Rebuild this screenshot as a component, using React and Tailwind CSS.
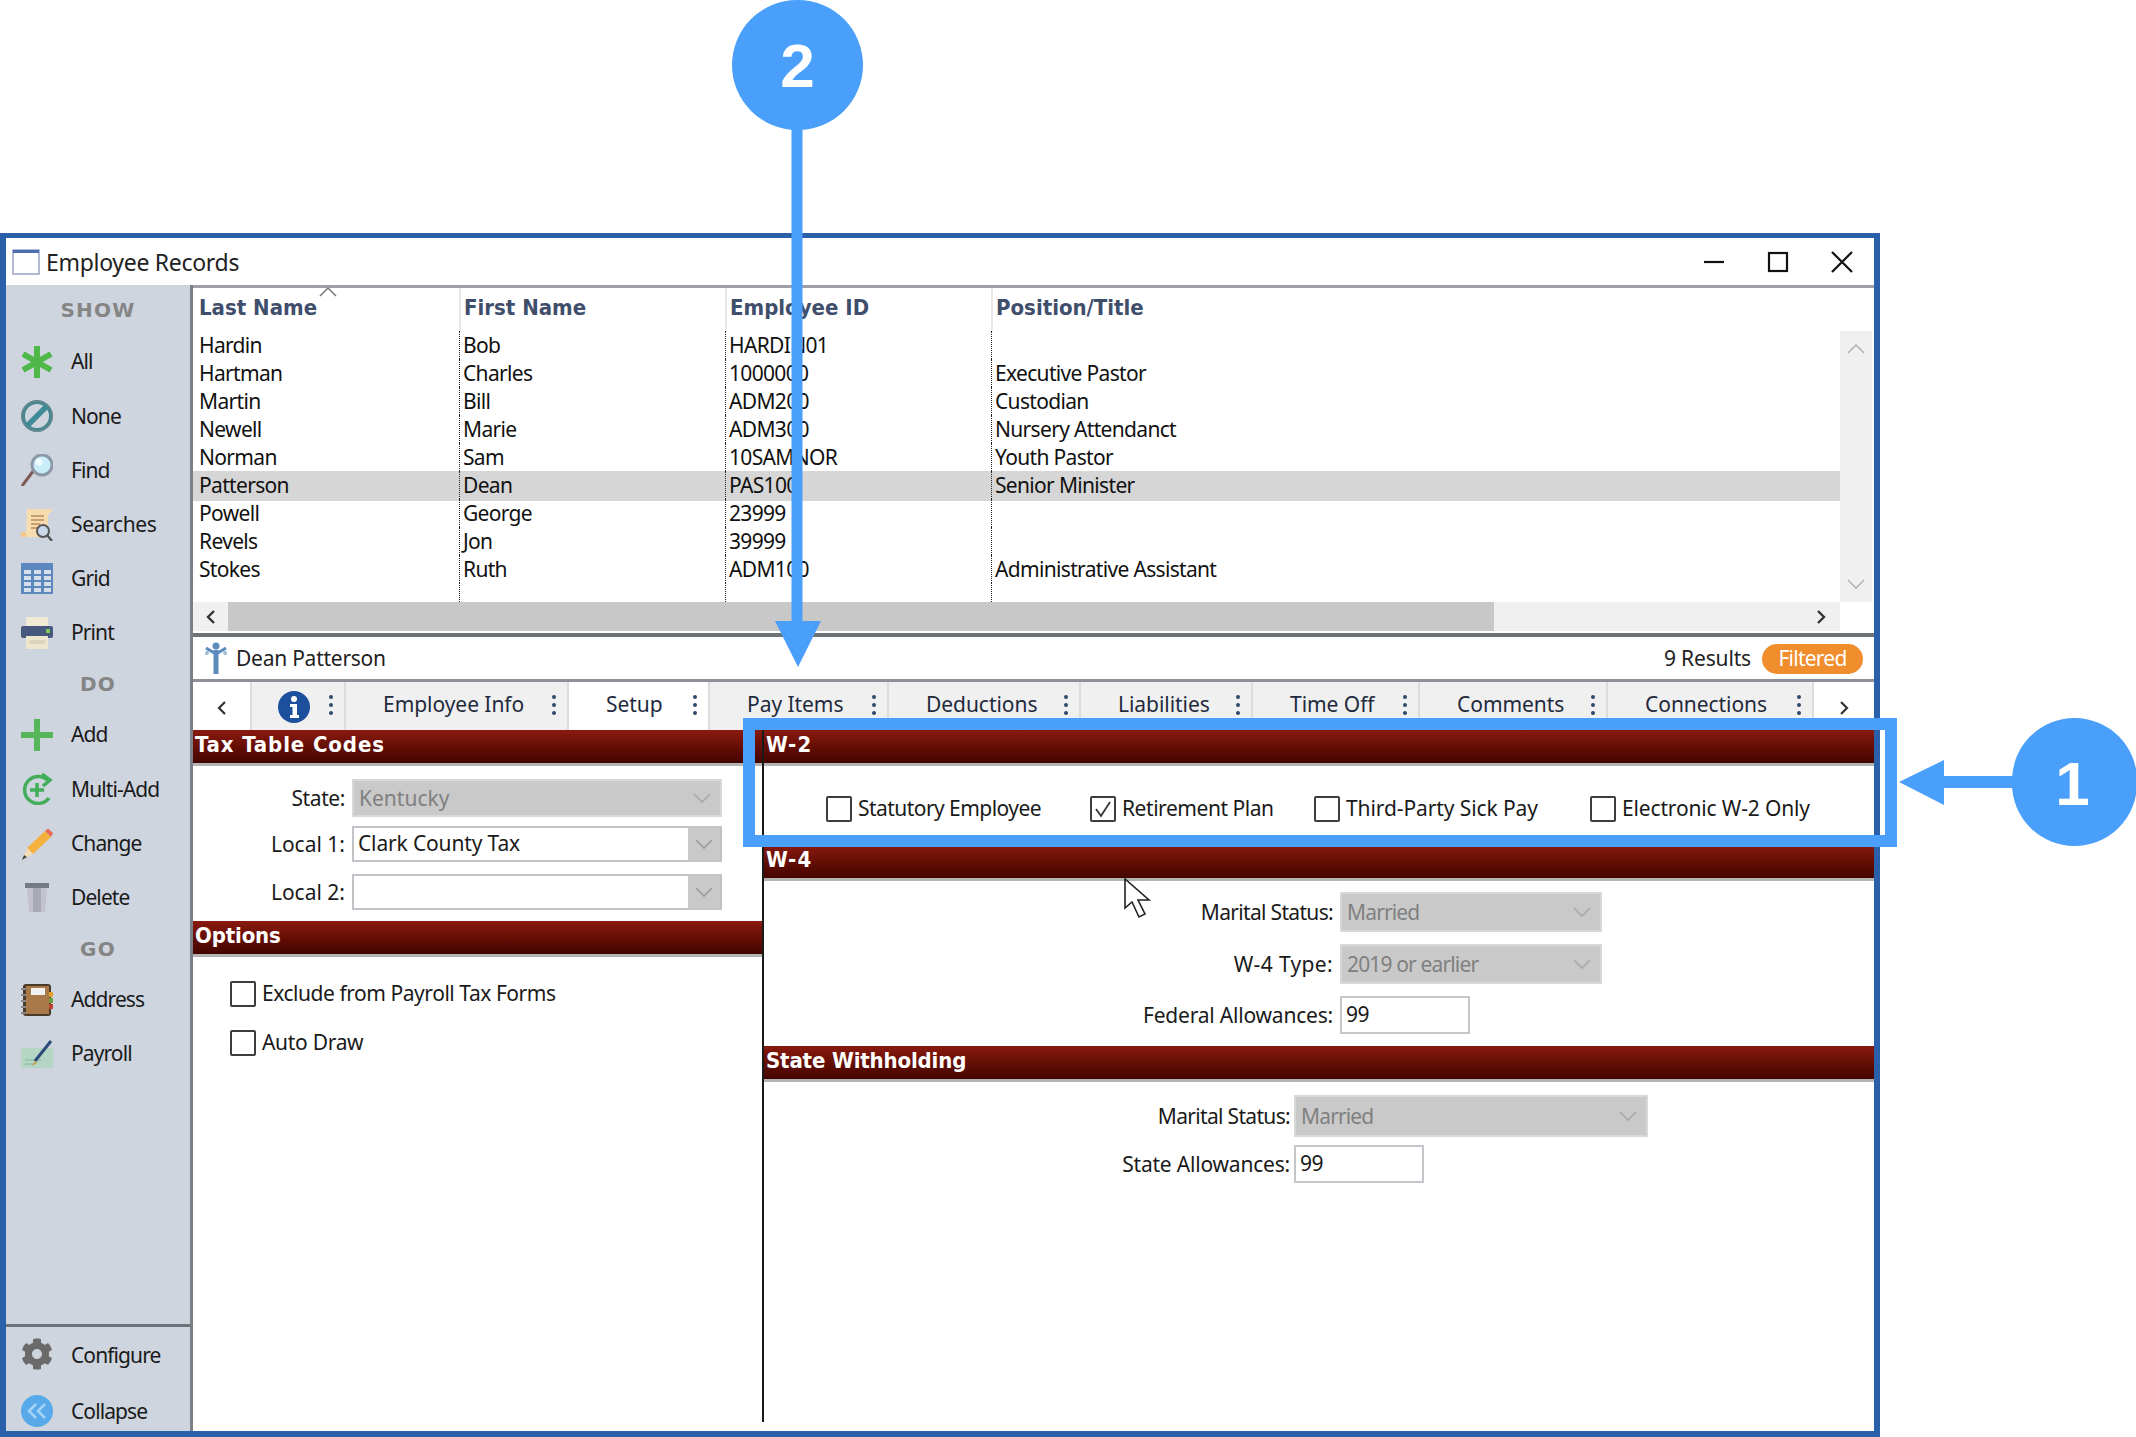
import React from "react";
import { FaCog } from "react-icons/fa";

const Ic = ({ children }) => (
  <svg viewBox="0 0 32 32" className="w-[32px] h-[32px] shrink-0">{children}</svg>
);

const icons = {
  All: (
    <Ic>
      <g stroke="#4fb848" strokeWidth="6" strokeLinecap="butt">
        <path d="M16 0V32M2 8L30 24M2 24L30 8" />
      </g>
    </Ic>
  ),
  None: (
    <Ic>
      <circle cx="16" cy="16" r="14" fill="#ced5df" stroke="#4b8790" strokeWidth="4" />
      <circle cx="16" cy="16" r="15.5" fill="none" stroke="#7b8a92" strokeWidth="1" />
      <path d="M7 25L25 7" stroke="#3f8c96" strokeWidth="5.5" />
    </Ic>
  ),
  Find: (
    <Ic>
      <path d="M1 32L13 16" stroke="#7d5a52" strokeWidth="3" />
      <circle cx="21" cy="11" r="10" fill="#c9eefa" stroke="#8d98a8" strokeWidth="3" />
      <circle cx="18" cy="8" r="3.5" fill="#f0fbff" />
    </Ic>
  ),
  Searches: (
    <Ic>
      <path d="M6 0H32L27 6V28H0L5 23Z" fill="#f7dcb0" />
      <path d="M5 23H0V28H5Z" fill="#f2c88c" />
      <path d="M10 7H23M10 11H23M10 15H19M10 19H17" stroke="#c9a070" strokeWidth="2" />
      <circle cx="22" cy="22" r="6" fill="#c9d8e8" stroke="#555" strokeWidth="2" />
      <path d="M26 26L31 32" stroke="#555" strokeWidth="2.5" />
    </Ic>
  ),
  Grid: (
    <Ic>
      <rect x="0" y="0" width="32" height="31" fill="#5d88bd" />
      <g fill="#d5dee9">
        {[7, 13, 19, 25].map((y) =>
          [3, 13, 23].map((x) => <rect key={x + "-" + y} x={x} y={y} width="7" height="4" />)
        )}
      </g>
    </Ic>
  ),
  Print: (
    <Ic>
      <rect x="5" y="0" width="22" height="10" fill="#f0ead4" />
      <rect x="0" y="9" width="32" height="12" rx="2" fill="#47587e" />
      <rect x="25" y="12" width="4" height="4" fill="#7ec850" />
      <rect x="5" y="19" width="22" height="13" fill="#eee7cf" />
      <rect x="8" y="23" width="16" height="4" fill="#dcd5bc" />
    </Ic>
  ),
  Add: (
    <Ic>
      <path d="M16 0V32M0 16H32" stroke="#56b65a" strokeWidth="6" />
    </Ic>
  ),
  "Multi-Add": (
    <Ic>
      <path d="M28 9A13.5 13.5 0 1 0 28 25" fill="none" stroke="#44ad5a" strokeWidth="3.5" />
      <path d="M21 1L29 7L22 13" fill="none" stroke="#44ad5a" strokeWidth="3.5" />
      <path d="M16 10V24M9 17H23" stroke="#44ad5a" strokeWidth="3.5" />
    </Ic>
  ),
  Change: (
    <Ic>
      <path d="M6 20L24 3L30 9L12 26Z" fill="#f5b13d" />
      <path d="M24 3L27 0.5L32 5L30 9Z" fill="#e96a55" />
      <path d="M6 20L12 26L1 32Z" fill="#f3dcb4" />
      <path d="M1 32L3 27L6 29Z" fill="#444" />
    </Ic>
  ),
  Delete: (
    <Ic>
      <rect x="4" y="1" width="24" height="5" fill="#767a84" />
      <path d="M6 6H26L24 30H8Z" fill="#c2c3cc" />
      <rect x="12" y="6" width="8" height="24" fill="#a8abb6" />
    </Ic>
  ),
  Address: (
    <Ic>
      <rect x="2" y="0" width="28" height="32" rx="3" fill="#4a3a28" />
      <rect x="5" y="2" width="23" height="28" fill="#a9794a" />
      <rect x="10" y="4" width="14" height="7" fill="#f2f2f2" />
      <rect x="28" y="8" width="4" height="5" fill="#e0a030" />
      <rect x="28" y="14" width="4" height="5" fill="#6aa040" />
      <rect x="28" y="20" width="4" height="5" fill="#c04030" />
      <g fill="#888">
        {[4, 10, 16, 22, 28].map((y) => (
          <rect key={y} x="0" y={y} width="5" height="2" />
        ))}
      </g>
    </Ic>
  ),
  Payroll: (
    <Ic>
      <rect x="0" y="10" width="32" height="20" fill="#b5d6c4" />
      <path d="M4 22H20M4 26H14" stroke="#9cc4ae" strokeWidth="2" />
      <path d="M14 23L30 3" stroke="#2e4a78" strokeWidth="3" />
      <path d="M14 23L11 28L16 25Z" fill="#c9a040" />
    </Ic>
  ),
  Configure: <FaCog className="w-[32px] h-[32px] shrink-0 text-[#6a6a6a]" />,
  Collapse: (
    <Ic>
      <circle cx="16" cy="16" r="16" fill="#58a9ea" />
      <path d="M15 9L8 16L15 23M24 9L17 16L24 23" fill="none" stroke="#a5d4f8" strokeWidth="2.5" />
    </Ic>
  ),
};

const Item = ({ label, h = "h-[54.2px]", track = "tracking-[-0.9px]", textPad = "" }) => (
  <div className={`${h} shrink-0 flex items-center pl-[15px] gap-[18px] text-[21px] ${track} text-[#1a1a1a]`}>
    {icons[label]}
    <span className={textPad}>{label}</span>
  </div>
);

const Heading = ({ children, h = "h-[48px]" }) => (
  <div className={`${h} shrink-0 flex items-center justify-center font-['DejaVu_Sans'] font-bold text-[20px] text-[#858585] tracking-[1.2px]`}>
    {children}
  </div>
);

const rows = [
  ["Hardin", "Bob", "HARDIN01", ""],
  ["Hartman", "Charles", "1000000", "Executive Pastor"],
  ["Martin", "Bill", "ADM200", "Custodian"],
  ["Newell", "Marie", "ADM300", "Nursery Attendanct"],
  ["Norman", "Sam", "10SAMNOR", "Youth Pastor"],
  ["Patterson", "Dean", "PAS100", "Senior Minister"],
  ["Powell", "George", "23999", ""],
  ["Revels", "Jon", "39999", ""],
  ["Stokes", "Ruth", "ADM100", "Administrative Assistant"],
];

const Dots = () => (
  <span className="flex flex-col gap-[4px] shrink-0">
    <i className="block w-[4px] h-[4px] rounded-full bg-[#2f4a6b]" />
    <i className="block w-[4px] h-[4px] rounded-full bg-[#2f4a6b]" />
    <i className="block w-[4px] h-[4px] rounded-full bg-[#2f4a6b]" />
  </span>
);

const Tab = ({ label, w, active }) => (
  <div
    className={`${w} ${active ? "bg-white" : "bg-[#f0f0f0]"} h-full flex items-center justify-between pl-[37px] pr-[11px] pb-[3px] border-r-2 border-[#dcdcdc] text-[21px] text-[#1f2a3d] tracking-[-0.05px]`}
  >
    <span>{label}</span>
    <Dots />
  </div>
);

const Section = ({ children, track = "tracking-[-0.15px]" }) => (
  <div className="h-[36px] shrink-0 pl-[2px] bg-linear-to-b from-[#8a1a10] to-[#430500] border-b-[3px] border-[#b4b4b4] flex items-start">
    <span className={`font-['DejaVu_Sans_Condensed','DejaVu_Sans'] font-bold text-[22px] leading-[30px] text-white ${track}`}>{children}</span>
  </div>
);

const Chevron = ({ className = "", color = "#a8a8a8" }) => (
  <svg viewBox="0 0 20 12" className={`w-[20px] h-[12px] ${className}`}>
    <path d="M2 2L10 10L18 2" fill="none" stroke={color} strokeWidth="1.6" />
  </svg>
);

const Disabled = ({ value, w, track = "tracking-[-0.85px]" }) => (
  <div className={`${w} h-full bg-[#c9c9c9] border-2 border-[#d8d8d8] flex items-center justify-between pl-[5px] pr-[8px] text-[21px] text-[#808080] ${track}`}>
    <span className="pt-[1px]">{value}</span>
    <Chevron />
  </div>
);

const Combo = ({ value }) => (
  <div className="w-[370px] h-full bg-white border-2 border-[#c0c2c8] flex items-center justify-between pl-[4px] text-[21px] text-[#1a1a1a] tracking-[-0.15px]">
    <span>{value}</span>
    <span className="w-[32px] h-full bg-[#c9c9c9] flex items-center justify-center">
      <Chevron color="#9a9a9a" />
    </span>
  </div>
);

const Input = ({ value }) => (
  <div className="w-[130px] h-full bg-white border-2 border-[#c4c6cc] flex items-center pl-[4px] text-[21px] text-[#1a1a1a] tracking-[-0.4px]">
    {value}
  </div>
);

const Box = ({ checked }) => (
  <span className="w-[26px] h-[26px] shrink-0 border-2 border-[#3d3d3d] bg-white rounded-[2px] flex items-center justify-center">
    {checked && (
      <svg viewBox="0 0 20 20" className="w-[20px] h-[20px]">
        <path d="M3 10L8 17L17 3" fill="none" stroke="#333" strokeWidth="1.8" />
      </svg>
    )}
  </span>
);

const Check = ({ label, checked, w, track }) => (
  <div className={`${w} flex items-center gap-[6px] h-[30px] text-[21px] text-[#1a1a1a] ${track} whitespace-nowrap`}>
    <Box checked={checked} />
    <span>{label}</span>
  </div>
);

const Row = ({ label, labelW, h, mt, gap, track = "tracking-[-0.67px]", children }) => (
  <div className={`flex items-center ${h} ${mt} ${gap}`}>
    <div className={`${labelW} pt-[1px] text-right text-[21px] text-[#1a1a1a] ${track} shrink-0`}>{label}</div>
    {children}
  </div>
);

export default function App() {
  return (
    <div className="relative w-[2136px] h-[1437px] overflow-hidden bg-white pt-[233px] font-['Noto_Sans',sans-serif]">
      <div className="w-[1880px] h-[1204px] border-t-[5px] border-x-[6px] border-b-[6px] border-[#2a5fa9] bg-white flex flex-col">
        {/* title bar */}
        <div className="h-[47px] shrink-0 flex items-center pl-[6px] pr-[20px]">
          <svg viewBox="0 0 28 26" className="w-[28px] h-[26px] shrink-0">
            <rect x="1" y="1" width="26" height="24" fill="#fff" stroke="#9aa2c4" strokeWidth="1.5" />
            <rect x="1" y="1" width="26" height="3" fill="#4a6fb0" />
          </svg>
          <span className="ml-[6px] pt-[2px] text-[23px] text-[#222] tracking-[-0.3px]">Employee Records</span>
          <div className="ml-auto flex items-center gap-[40px]">
            <svg viewBox="0 0 24 24" className="w-[24px] h-[24px]"><path d="M2 12H22" stroke="#111" strokeWidth="2.2" /></svg>
            <svg viewBox="0 0 24 24" className="w-[24px] h-[24px]"><rect x="3" y="3" width="18" height="18" fill="none" stroke="#111" strokeWidth="2.2" /></svg>
            <svg viewBox="0 0 24 24" className="w-[24px] h-[24px]"><path d="M2 2L22 22M22 2L2 22" stroke="#111" strokeWidth="2.2" /></svg>
          </div>
        </div>

        <div className="flex flex-1 min-h-0">
          {/* sidebar */}
          <aside className="w-[187px] shrink-0 bg-[#ced5df] border-r-[3px] border-[#7c7f84] flex flex-col">
            <Heading h="h-[50px]">SHOW</Heading>
            {["All", "None", "Find"].map((l) => <Item key={l} label={l} />)}
            <Item label="Searches" track="tracking-[-0.35px]" />
            {["Grid", "Print"].map((l) => <Item key={l} label={l} />)}
            <Heading>DO</Heading>
            {["Add", "Multi-Add", "Change", "Delete"].map((l) => <Item key={l} label={l} />)}
            <Heading>GO</Heading>
            {["Address", "Payroll"].map((l) => <Item key={l} label={l} />)}
            <div className="mt-auto border-t-[3px] border-[#6f7277]">
              <Item label="Configure" h="h-[54px]" textPad="pt-[4px]" />
              <Item label="Collapse" h="h-[50px] pt-[10px]" textPad="pt-[2px]" />
            </div>
          </aside>

          {/* main */}
          <main className="flex-1 min-w-0 flex flex-col">
            {/* list */}
            <div className="h-[348px] shrink-0 border-t-[3px] border-[#9da1a7] flex flex-col">
              <div className="h-[43px] shrink-0 grid grid-cols-[266px_266px_266px_1fr] font-['DejaVu_Sans_Condensed','DejaVu_Sans'] font-bold text-[22px] text-[#3f4e6b] relative">
                {["Last Name", "First Name", "Employee ID", "Position/Title"].map((t, i) => (
                  <div key={t} className={`pt-[3px] ${i ? "pl-[3px] border-l-2 border-[#e8e8e8]" : "pl-[6px]"}`}>{t}</div>
                ))}
                <svg viewBox="0 0 18 10" className="absolute left-[126px] top-[-1px] w-[18px] h-[10px]">
                  <path d="M1 9L9 1L17 9" fill="none" stroke="#777" strokeWidth="1.5" />
                </svg>
              </div>
              <div className="h-[271px] shrink-0 flex">
                <div className="flex-1 min-w-0 flex flex-col">
                  {rows.map((r) => (
                    <div
                      key={r[0]}
                      className={`h-[28px] shrink-0 grid grid-cols-[266px_266px_266px_1fr] text-[21px] leading-[28px] tracking-[-0.67px] text-[#111] ${r[0] === "Patterson" ? "bg-[#d6d6d6] shadow-[0_2px_0_#d6d6d6]" : ""}`}
                    >
                      {r.map((c, i) => (
                        <div key={i} className={`whitespace-nowrap ${i ? "border-l border-dotted border-[#222] pl-[3px]" : "pl-[6px]"}`}>{c}</div>
                      ))}
                    </div>
                  ))}
                  <div className="flex-1 grid grid-cols-[266px_266px_266px_1fr]">
                    <div />
                    <div className="border-l border-dotted border-[#222]" />
                    <div className="border-l border-dotted border-[#222]" />
                    <div className="border-l border-dotted border-[#222]" />
                  </div>
                </div>
                <div className="w-[32px] shrink-0 mr-[2px] bg-[#f0f0f0] flex flex-col items-center justify-between py-[12px]">
                  <Chevron className="rotate-180" color="#b4b4b4" />
                  <Chevron color="#b4b4b4" />
                </div>
              </div>
              <div className="h-[29px] shrink-0 mr-[34px] bg-[#f0f0f0] flex items-center">
                <span className="w-[35px] h-full flex items-center justify-center">
                  <svg viewBox="0 0 10 16" className="w-[10px] h-[16px]"><path d="M8 2L2 8L8 14" fill="none" stroke="#333" strokeWidth="2.4" /></svg>
                </span>
                <span className="w-[1266px] h-full bg-[#c8c8c8]" />
                <span className="ml-auto w-[38px] flex items-center justify-center">
                  <svg viewBox="0 0 10 16" className="w-[10px] h-[16px]"><path d="M2 2L8 8L2 14" fill="none" stroke="#333" strokeWidth="2.4" /></svg>
                </span>
              </div>
            </div>

            {/* name bar */}
            <div className="h-[46px] shrink-0 border-t-[4px] border-[#6f7277] flex items-center pl-[12px] pr-[11px]">
              <svg viewBox="0 0 22 32" className="w-[22px] h-[32px] shrink-0">
                <circle cx="11" cy="4" r="3.5" fill="#5c8cbd" />
                <path d="M11 8V32" stroke="#5c8cbd" strokeWidth="5" />
                <path d="M1 6L11 12L21 6" fill="none" stroke="#5c8cbd" strokeWidth="3" />
                <circle cx="2" cy="11" r="2" fill="#9dbad8" />
                <circle cx="20" cy="11" r="2" fill="#9dbad8" />
              </svg>
              <span className="ml-[9px] pt-[2px] text-[21px] text-[#222] tracking-[-0.25px]">Dean Patterson</span>
              <span className="ml-auto pt-[1px] text-[21px] text-[#222] tracking-[-0.15px]">9 Results</span>
              <span className="ml-[11px] w-[101px] h-[30px] mt-[1px] rounded-full bg-[#f08d2d] flex items-center justify-center text-[21px] text-white tracking-[-0.75px]">Filtered</span>
            </div>

            {/* tabs */}
            <div className="h-[51px] shrink-0 border-t-[3px] border-[#8d9096] flex">
              <div className="w-[59px] h-full flex items-center justify-center border-r-2 border-[#dcdcdc]">
                <svg viewBox="0 0 10 16" className="w-[10px] h-[16px] mt-[4px]"><path d="M8 2L2 8L8 14" fill="none" stroke="#333" strokeWidth="2.2" /></svg>
              </div>
              <div className="w-[94px] h-full bg-[#f0f0f0] border-r-2 border-[#dcdcdc] flex items-center justify-end pr-[11px] pb-[3px] gap-[19px]">
                <svg viewBox="0 0 32 32" className="w-[32px] h-[32px] mt-[5px]">
                  <circle cx="16" cy="16" r="16" fill="#1c4f9c" />
                  <circle cx="16" cy="8" r="3" fill="#fff" />
                  <path d="M12 13H19V24H21V27H12V24H14.5V16H12Z" fill="#fff" />
                </svg>
                <Dots />
              </div>
              <Tab label="Employee Info" w="w-[223px]" />
              <Tab label="Setup" w="w-[141px]" active />
              <Tab label="Pay Items" w="w-[179px]" />
              <Tab label="Deductions" w="w-[192px]" />
              <Tab label="Liabilities" w="w-[172px]" />
              <Tab label="Time Off" w="w-[167px]" />
              <Tab label="Comments" w="w-[188px]" />
              <Tab label="Connections" w="w-[206px]" />
              <div className="flex-1 h-full flex items-center justify-center">
                <svg viewBox="0 0 10 16" className="w-[10px] h-[16px] mt-[4px]"><path d="M2 2L8 8L2 14" fill="none" stroke="#333" strokeWidth="2.2" /></svg>
              </div>
            </div>

            {/* panels */}
            <div className="flex-1 min-h-0 flex">
              <div className="w-[569px] shrink-0 flex flex-col">
                <Section track="tracking-[0.9px]">Tax Table Codes</Section>
                <Row label="State:" labelW="w-[152px]" h="h-[38px]" mt="mt-[13px]" gap="gap-[7px]" track="tracking-[-0.4px]">
                  <Disabled value="Kentucky" w="w-[370px]" track="tracking-[0px]" />
                </Row>
                <Row label="Local 1:" labelW="w-[152px]" h="h-[36px]" mt="mt-[9px]" gap="gap-[7px]" track="tracking-[0px]">
                  <Combo value="Clark County Tax" />
                </Row>
                <Row label="Local 2:" labelW="w-[152px]" h="h-[36px]" mt="mt-[12px]" gap="gap-[7px]" track="tracking-[0px]">
                  <Combo value="" />
                </Row>
                <div className="mt-[11px]"><Section>Options</Section></div>
                <div className="pl-[37px] pt-[22px] flex flex-col gap-[19px]">
                  <Check label="Exclude from Payroll Tax Forms" track="tracking-[-0.45px]" />
                  <Check label="Auto Draw" track="tracking-[-0.3px]" />
                </div>
              </div>

              <div className="flex-1 min-w-0 border-l-2 border-[#1a1a1a] mb-[9px] flex flex-col">
                <Section track="tracking-[1.2px]">W-2</Section>
                <div className="h-[79px] shrink-0 pl-[62px] pt-[28px] flex items-start">
                  <Check label="Statutory Employee" w="w-[264px]" track="tracking-[-0.55px]" />
                  <Check label="Retirement Plan" checked w="w-[224px]" track="tracking-[-0.45px]" />
                  <Check label="Third-Party Sick Pay" w="w-[276px]" track="tracking-[-0.1px]" />
                  <Check label="Electronic W-2 Only" track="tracking-[-0.15px]" />
                </div>
                <Section track="tracking-[1.2px]">W-4</Section>
                <Row label="Marital Status:" labelW="w-[569px]" h="h-[40px]" mt="mt-[11px]" gap="gap-[7px]">
                  <Disabled value="Married" w="w-[262px]" />
                </Row>
                <Row label="W-4 Type:" labelW="w-[569px]" h="h-[40px]" mt="mt-[12px]" gap="gap-[7px]" track="tracking-[0.35px]">
                  <Disabled value="2019 or earlier" w="w-[262px]" />
                </Row>
                <Row label="Federal Allowances:" labelW="w-[569px]" h="h-[38px]" mt="mt-[12px]" gap="gap-[7px]" track="tracking-[-0.2px]">
                  <Input value="99" />
                </Row>
                <div className="mt-[12px]"><Section>State Withholding</Section></div>
                <Row label="Marital Status:" labelW="w-[526px]" h="h-[42px]" mt="mt-[13px]" gap="gap-[4px]">
                  <Disabled value="Married" w="w-[354px]" />
                </Row>
                <Row label="State Allowances:" labelW="w-[526px]" h="h-[38px]" mt="mt-[8px]" gap="gap-[4px]" track="tracking-[-0.2px]">
                  <Input value="99" />
                </Row>
              </div>
            </div>
          </main>
        </div>
      </div>

      {/* annotations */}
      <svg viewBox="0 0 2136 1437" className="absolute inset-0 w-[2136px] h-[1437px] pointer-events-none">
        <rect x="749" y="724" width="1142" height="117" fill="none" stroke="#4a9ffa" strokeWidth="12" />
        <path d="M797 120V625" stroke="#4a9ffa" strokeWidth="11" />
        <path d="M775 621H821L798 667Z" fill="#4a9ffa" />
        <path d="M1940 782H2020" stroke="#4a9ffa" strokeWidth="12" />
        <path d="M1899 782L1944 760V805Z" fill="#4a9ffa" />
        <path d="M1125 879L1125 908L1132 902L1139 917L1145 914L1138 900L1149 900Z" fill="#fff" stroke="#222" strokeWidth="1.6" />
      </svg>
      <div className="absolute left-[732px] top-0 w-[131px] h-[130px] rounded-full bg-[#4a9ffa] flex items-center justify-center text-white font-['Liberation_Sans'] font-bold text-[62px]">2</div>
      <div className="absolute left-[2012px] top-[718px] w-[125px] h-[128px] rounded-full bg-[#4a9ffa] flex items-center justify-center pr-[4px] pt-[2px] text-white font-['Liberation_Sans'] font-bold text-[62px]">1</div>
    </div>
  );
}
